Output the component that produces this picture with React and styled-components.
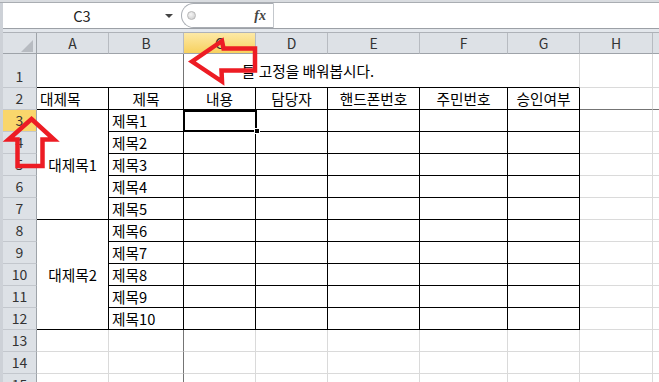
import React from 'react';
import styled, { createGlobalStyle } from 'styled-components';

const COLUMNS = ['A', 'B', 'C', 'D', 'E', 'F', 'G', 'H'];
const HEADINGS = ['대제목', '제목', '내용', '담당자', '핸드폰번호', '주민번호', '승인여부'];
const GROUPS = [
  { title: '대제목1', items: ['제목1', '제목2', '제목3', '제목4', '제목5'] },
  { title: '대제목2', items: ['제목6', '제목7', '제목8', '제목9', '제목10'] },
];
const ROW_COUNT = 15;
const LINES = { grid: '#dadada', table: '#000', freeze: '#747474', none: 'transparent' };

// border colours of a sheet cell, row 1-based, col 0 = A ... 8 = I
function edges(row, col) {
  let right = 'grid';
  let bottom = 'grid';
  if (row >= 2 && row <= 12 && col <= 6) {
    right = 'table';
    bottom = 'table';
  } else if (col === 1 && row >= 13) {
    right = 'freeze';
  }
  if (row === 2 && col >= 7) bottom = 'freeze';
  if (col === 8) right = 'none';
  return { $right: right, $bottom: bottom };
}

function Sheet() {
  const cells = [];

  cells.push(
    <Corner key="corner">
      <CornerMark />
    </Corner>
  );
  COLUMNS.forEach((c, i) => {
    cells.push(
      <ColHeader key={c} $col={i + 2} $active={c === 'C'}>
        {c}
      </ColHeader>
    );
  });
  cells.push(<ColHeader key="I" $col={10} $last />);

  for (let r = 1; r <= ROW_COUNT; r++) {
    cells.push(
      <RowHeader key={`h${r}`} $row={r + 1} $active={r === 3}>
        {r}
      </RowHeader>
    );
  }

  // row 1: merged title
  cells.push(
    <Cell key="title" $row={2} $col={2} $colSpan={7} $right="grid" $bottom="table">
      틀 고정을 배워봅시다.
    </Cell>
  );
  cells.push(<FreezeMark key="freeze1" $row={2} $col={3} />);
  cells.push(<Cell key="H1" $row={2} $col={9} {...edges(1, 7)} />);
  cells.push(<Cell key="I1" $row={2} $col={10} {...edges(1, 8)} />);

  // row 2: headings
  HEADINGS.forEach((text, i) => {
    cells.push(
      <Cell key={`hd${i}`} $row={3} $col={i + 2} $align={i === 0 ? 'left' : 'center'} {...edges(2, i)}>
        {text}
      </Cell>
    );
  });
  cells.push(<Cell key="H2" $row={3} $col={9} {...edges(2, 7)} />);
  cells.push(<Cell key="I2" $row={3} $col={10} {...edges(2, 8)} />);

  // rows 3-12
  GROUPS.forEach((group, g) => {
    const first = 3 + g * 5;
    cells.push(
      <Cell key={group.title} $row={first + 1} $rowSpan={5} $col={2} {...edges(first, 0)}>
        {group.title}
      </Cell>
    );
    group.items.forEach((item, k) => {
      const row = first + k;
      cells.push(
        <Cell key={item} $row={row + 1} $col={3} $align="left" {...edges(row, 1)}>
          {item}
        </Cell>
      );
      for (let col = 2; col <= 8; col++) {
        const selected = row === 3 && col === 2;
        cells.push(
          <Cell key={`${row}-${col}`} $row={row + 1} $col={col + 2} $selected={selected} {...edges(row, col)}>
            {selected && (
              <Selection>
                <FillHandle />
              </Selection>
            )}
          </Cell>
        );
      }
    });
  });

  // rows 13-15
  for (let row = 13; row <= ROW_COUNT; row++) {
    for (let col = 0; col <= 8; col++) {
      cells.push(<Cell key={`${row}-${col}`} $row={row + 1} $col={col + 2} {...edges(row, col)} />);
    }
  }

  return <Grid>{cells}</Grid>;
}

export default function App() {
  return (
    <Page>
      <GlobalStyle />
      <TopStrip />
      <Body>
        <LeftStrip />
        <Main>
          <FormulaBar>
            <NameBox>
              <NameText>C3</NameText>
              <DropArrow />
            </NameBox>
            <FxBox>
              <Knob />
              <Fx>fx</Fx>
            </FxBox>
            <FormulaInput />
          </FormulaBar>
          <Band />
          <Sheet />
        </Main>
      </Body>
      <ArrowLayer width="659" height="382" viewBox="0 0 659 382">
        <polygon points="192,61.5 222,41 223.5,48.5 255,48.5 255,70.5 221.5,70.5 222,81.5" />
        <polygon points="31.5,119 54,139.5 42.5,139.5 42.5,166 17.5,166 17.5,139.5 8.5,139.5" />
      </ArrowLayer>
    </Page>
  );
}

const GlobalStyle = createGlobalStyle`
  html, body {
    margin: 0;
    padding: 0;
    background: #fff;
  }
  body {
    font-family: "Noto Sans CJK KR", "Noto Sans", sans-serif;
    overflow: hidden;
  }
  #root {
    width: 659px;
    height: 382px;
    overflow: hidden;
  }
`;

const Page = styled.div`
  position: relative;
  width: 659px;
  height: 382px;
  overflow: hidden;
  display: flex;
  flex-direction: column;
`;

const TopStrip = styled.div`
  height: 3px;
  box-sizing: border-box;
  background: #d9dce0;
  border-bottom: 1px solid #a9adb2;
  flex-shrink: 0;
`;

const Body = styled.div`
  flex: 1;
  display: flex;
  min-height: 0;
`;

const LeftStrip = styled.div`
  width: 3px;
  flex-shrink: 0;
  background: #cdd1d7;
`;

const Main = styled.div`
  flex: 1;
  min-width: 0;
  display: flex;
  flex-direction: column;
`;

const FormulaBar = styled.div`
  height: 26px;
  box-sizing: border-box;
  display: flex;
  align-items: stretch;
  background: #fff;
  border-bottom: 1px solid #9ca0a6;
  flex-shrink: 0;
`;

const NameBox = styled.div`
  width: 175px;
  display: flex;
  align-items: center;
`;

const NameText = styled.span`
  flex: 1;
  text-align: center;
  font-size: 14.7px;
  color: #222;
`;

const DropArrow = styled.span`
  width: 0;
  height: 0;
  margin: 1px 5px 0 4px;
  border-left: 4px solid transparent;
  border-right: 4px solid transparent;
  border-top: 4px solid #444;
`;

const FxBox = styled.div`
  width: 93px;
  margin-left: 3px;
  box-sizing: border-box;
  display: flex;
  align-items: center;
  border: 1px solid #a9adb3;
  border-right-color: #c3c7cc;
  border-radius: 13px 0 0 13px;
`;

const Knob = styled.span`
  width: 9px;
  height: 9px;
  margin-left: 5px;
  box-sizing: border-box;
  border-radius: 50%;
  border: 1px solid #b8b8b8;
  background: radial-gradient(circle at 40% 35%, #f6f6f6, #c9c9c9);
`;

const Fx = styled.span`
  margin-left: auto;
  margin-right: 7px;
  font-family: "Liberation Serif", serif;
  font-style: italic;
  font-weight: bold;
  font-size: 14px;
  color: #444;
`;

const FormulaInput = styled.div`
  flex: 1;
`;

const Band = styled.div`
  height: 4px;
  box-sizing: border-box;
  background: #e3e7ec;
  border-bottom: 1px solid #aeb2b8;
  flex-shrink: 0;
`;

const Grid = styled.div`
  display: grid;
  grid-template-columns: 34px 72px 75px 72px 72px 92px 88px 72px 73px 1fr;
  grid-template-rows: 21px 34px repeat(14, 22px);
  font-size: 14.7px;
  color: #000;
`;

const HeaderBase = styled.div`
  box-sizing: border-box;
  display: flex;
  justify-content: center;
  color: #333;
  font-size: 14px;
`;

const Corner = styled(HeaderBase)`
  grid-row: 1;
  grid-column: 1;
  align-items: flex-end;
  justify-content: flex-end;
  padding: 0 3px 1px 0;
  background: #dde1e6;
  border-right: 1px solid #9ea3a9;
  border-bottom: 1px solid #9ea3a9;
`;

const CornerMark = styled.span`
  width: 0;
  height: 0;
  border-left: 12px solid transparent;
  border-bottom: 12px solid #b7bbc1;
`;

const ColHeader = styled(HeaderBase)`
  grid-row: 1;
  grid-column: ${(p) => p.$col};
  align-items: center;
  background: ${(p) => (p.$active ? 'linear-gradient(#fde9a6, #f7d15f)' : '#dde1e6')};
  border-right: 1px solid ${(p) => (p.$last ? 'transparent' : '#b7bbc1')};
  border-bottom: 1px solid #9ea3a9;
`;

const RowHeader = styled(HeaderBase)`
  grid-column: 1;
  grid-row: ${(p) => p.$row};
  align-items: flex-end;
  line-height: 21px;
  background: ${(p) => (p.$active ? '#f9d66c' : '#dde1e6')};
  border-right: 1px solid #9ea3a9;
  border-bottom: 1px solid #c3c7cd;
`;

const Cell = styled.div`
  grid-row: ${(p) => p.$row} / span ${(p) => p.$rowSpan || 1};
  grid-column: ${(p) => p.$col} / span ${(p) => p.$colSpan || 1};
  box-sizing: border-box;
  min-width: 0;
  display: flex;
  align-items: center;
  justify-content: ${(p) => (p.$align === 'left' ? 'flex-start' : 'center')};
  padding: 0 3px;
  white-space: nowrap;
  background: #fff;
  border-right: 1px solid ${(p) => LINES[p.$right || 'grid']};
  border-bottom: 1px solid ${(p) => LINES[p.$bottom || 'grid']};
  position: ${(p) => (p.$selected ? 'relative' : 'static')};
  z-index: ${(p) => (p.$selected ? 2 : 'auto')};
`;

const FreezeMark = styled.div`
  grid-row: ${(p) => p.$row};
  grid-column: ${(p) => p.$col};
  justify-self: end;
  align-self: start;
  width: 1px;
  height: calc(100% - 1px);
  background: ${LINES.freeze};
`;

const Selection = styled.div`
  position: absolute;
  left: -1px;
  top: 0;
  right: -2px;
  bottom: -1px;
  border: 2px solid #000;
  pointer-events: none;
`;

const FillHandle = styled.div`
  position: absolute;
  right: -5px;
  bottom: -4px;
  width: 6px;
  height: 6px;
  box-sizing: border-box;
  background: #000;
  border: 1px solid #fff;
`;

const ArrowLayer = styled.svg`
  position: absolute;
  left: 0;
  top: 0;
  pointer-events: none;
  z-index: 5;

  polygon {
    fill: none;
    stroke: #ed1c24;
    stroke-width: 4.5;
    stroke-linejoin: miter;
  }
`;
